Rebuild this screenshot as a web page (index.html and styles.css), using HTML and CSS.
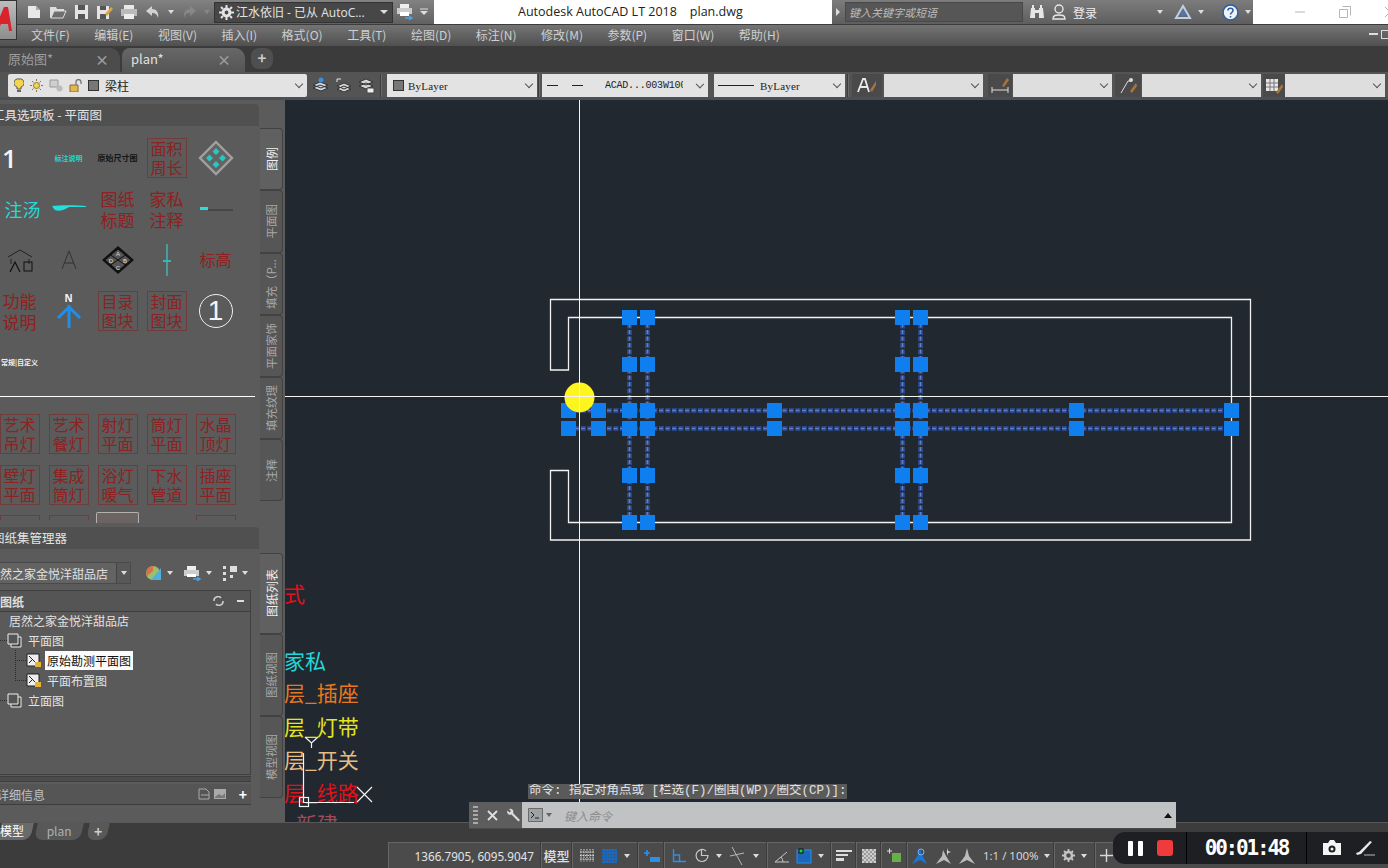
FILE: index.html
```html
<!DOCTYPE html>
<html lang="zh">
<head>
<meta charset="utf-8">
<title>Autodesk AutoCAD LT 2018 plan.dwg</title>
<link rel="stylesheet" href="styles.css">
</head>
<body>
<div class="app">

  <header class="titlebar">
    <div class="qat">
      <svg class="ic" width="16" height="16" viewBox="0 0 16 16"><path d="M2 2h8l4 4v8H2z" fill="#e8e8e8"/><path d="M10 2v4h4" fill="#aaa"/></svg>
      <svg class="ic" width="18" height="16" viewBox="0 0 18 16"><path d="M1 3h6l1 2h7v2H5L2 14H1z" fill="#ddd"/><path d="M5 7h12l-3 7H2z" fill="none" stroke="#ddd"/></svg>
      <svg class="ic" width="15" height="16" viewBox="0 0 15 16"><path d="M1 1h13v14H1z" fill="#e4e4e4"/><path d="M4 1h7v5H4zM4 10h7v5H4z" fill="#555"/></svg>
      <svg class="ic" width="17" height="16" viewBox="0 0 17 16"><path d="M1 2h12v13H1z" fill="#e4e4e4"/><path d="M4 2h6v4H4zM4 10h6v5H4z" fill="#555"/><path d="M9 10l6-7 2 2-6 7z" fill="#d9a441"/></svg>
      <svg class="ic" width="18" height="16" viewBox="0 0 18 16"><path d="M4 1h10v4H4z" fill="#e8e8e8"/><path d="M1 5h16v7H1z" fill="#bbb"/><path d="M4 10h10v5H4z" fill="#eee"/></svg>
      <svg class="ic" width="16" height="14" viewBox="0 0 16 14"><path d="M7 1L1 6l6 5V8c3 0 5 1 6 5 1-5-1-9-6-9z" fill="#d2d2d2"/></svg>
      <span class="tri-s"></span>
      <svg class="ic dim" width="16" height="14" viewBox="0 0 16 14"><path d="M9 1l6 5-6 5V8C6 8 4 9 3 13 2 8 4 4 9 4z" fill="#8c8c8c"/></svg>
      <span class="tri-s dim"></span>
      <div class="workspace">
        <svg width="15" height="15" viewBox="0 0 15 15"><circle cx="7.5" cy="7.5" r="3.4" fill="none" stroke="#e4e4e4" stroke-width="3"/><path d="M7.5 0v3M7.5 12v3M0 7.5h3M12 7.5h3M2 2l2 2M11 11l2 2M13 2l-2 2M2 13l2-2" stroke="#e4e4e4" stroke-width="2"/></svg>
        <span class="ws-text">江水依旧 - 已从 AutoC...</span>
        <span class="tri"></span>
      </div>
      <svg class="ic" width="18" height="18" viewBox="0 0 18 18"><path d="M4 1h9v4H4z" fill="#eee"/><path d="M1 5h15v6H1z" fill="#ccc"/><path d="M4 9h9v4H4z" fill="#fff"/><path d="M9 15h6M13 13l3 2-3 2" stroke="#4da3e0" fill="none" stroke-width="1.5"/></svg>
      <svg class="ic qat-more" width="10" height="8" viewBox="0 0 10 8"><path d="M1 1h8" stroke="#ddd"/><path d="M1 3h8L5 7z" fill="#ddd"/></svg>
    </div>
    <div class="apptitle">Autodesk AutoCAD LT 2018    plan.dwg</div>
    <div class="infocenter">
      <span class="tri-r"></span>
      <div class="search">键入关键字或短语</div>
      <svg class="ic" width="16" height="16" viewBox="0 0 16 16"><path d="M2 4h4v10H1zM10 4h4l1 10h-5z" fill="#e6e6e6"/><path d="M3 1h2v3H3zM11 1h2v3h-2zM6 6h4v3H6z" fill="#e6e6e6"/></svg>
      <svg class="ic" width="16" height="18" viewBox="0 0 16 18"><circle cx="8" cy="6" r="4" fill="none" stroke="#e6e6e6" stroke-width="1.4"/><path d="M2 16c0-4 3-4 6-4s6 0 6 4z" fill="none" stroke="#e6e6e6" stroke-width="1.4"/></svg>
      <span class="login">登录</span>
      <span class="tri-s login-arrow"></span>
      <svg class="ic" width="18" height="17" viewBox="0 0 18 17"><path d="M9 2L2 14h14z" fill="none" stroke="#bcd0ea" stroke-width="2"/><circle cx="9" cy="10" r="2.2" fill="#4d78b8"/></svg>
      <span class="tri-s"></span>
      <svg class="ic help" width="17" height="17" viewBox="0 0 17 17"><circle cx="8.5" cy="8.5" r="7.5" fill="#f2f2f2" stroke="#2a5ea8" stroke-width="1.6"/><path d="M6 6.5c0-3 5-3 5 0 0 2-2.5 2-2.5 4M8.5 12v1.5" fill="none" stroke="#2a5ea8" stroke-width="1.6"/></svg>
      <span class="tri-s"></span>
    </div>
    <div class="winbtns">
      <svg width="12" height="12" viewBox="0 0 12 12"><path d="M1 6h10" stroke="#b5b5b5"/></svg>
      <svg width="12" height="12" viewBox="0 0 12 12"><path d="M3.5 .5h8v9M.5 3.5h8v8h-8z" fill="none" stroke="#b5b5b5"/></svg>
      <svg width="12" height="12" viewBox="0 0 12 12"><path d="M1 1l10 10M11 1L1 11" stroke="#b5b5b5"/></svg>
    </div>
  </header>

  <nav class="menubar">
    <span>文件(F)</span><span>编辑(E)</span><span>视图(V)</span><span>插入(I)</span><span>格式(O)</span><span>工具(T)</span><span>绘图(D)</span><span>标注(N)</span><span>修改(M)</span><span>参数(P)</span><span>窗口(W)</span><span>帮助(H)</span>
    <span class="menu-win"><i class="mw-min"></i><i class="mw-max"></i></span>
  </nav>

  <div class="doctabs">
    <div class="doctab"><span>原始图*</span><b>×</b></div>
    <div class="doctab active"><span>plan*</span><b>×</b></div>
    <div class="doctab plus">+</div>
  </div>

  <div class="proptools">
    <div class="combo layer">
      <svg width="10" height="15" viewBox="0 0 10 15"><path d="M5 1a4 4 0 0 1 2 8v2H3V9a4 4 0 0 1 2-8z" fill="#f4d44a" stroke="#555"/><path d="M3 12h4v2H3z" fill="#666"/></svg>
      <svg width="13" height="13" viewBox="0 0 13 13"><circle cx="6.500" cy="6.500" r="3" fill="#f4d44a" stroke="#8a7a3a"/><path d="M6.500 0v2M6.500 11v2M0 6.500h2M11 6.500h2M2 2l1.500 1.500M9.500 9.500L11 11M11 2L9.500 3.500M2 11l1.500-1.500" stroke="#8a7a3a"/></svg>
      <svg width="14" height="13" viewBox="0 0 14 13"><path d="M1 1h8v7H1z" fill="#cfcfcf" stroke="#999"/><circle cx="10.500" cy="9.500" r="3" fill="#bbb"/></svg>
      <svg width="13" height="13" viewBox="0 0 13 13"><path d="M1 6h8v7H1z" fill="#e2b64a" stroke="#8a6a2a"/><path d="M7 6V3a2.500 2.500 0 0 1 5 0v2" fill="none" stroke="#777" stroke-width="1.300"/></svg>
      <i class="swatch"></i><span class="layername">梁柱</span><span class="chev"></span>
    </div>
    <svg class="tool first" width="17" height="17" viewBox="0 0 17 17"><path d="M1 8l7-3 8 3-7 3zM1 11l7-3 8 3-7 3z" fill="#cfd7de" stroke="#333"/><circle cx="9" cy="3" r="2.500" fill="#3c8ed8"/></svg>
    <svg class="tool" width="17" height="17" viewBox="0 0 17 17"><path d="M2 9l7-3 7 3-7 3zM2 12l7-3 7 3-7 3z" fill="#d4d4d4" stroke="#333"/><path d="M2 5V2h4" fill="none" stroke="#e8e8e8"/></svg>
    <svg class="tool" width="17" height="17" viewBox="0 0 17 17"><path d="M1 5l7-3 7 3-7 3zM1 9l7-3 7 3-7 3z" fill="#d4d4d4" stroke="#333"/><path d="M9 11h7v5H9z" fill="#eee" stroke="#444"/></svg>
    <i class="sep"></i>
    <div class="combo colorc"><i class="swatch"></i><span class="mono">ByLayer</span><span class="chev"></span></div>
    <i class="sep s-a"></i>
    <div class="combo ltype"><i class="dash"></i><i class="dash"></i><span class="mono small">ACAD...003W100</span><span class="chev"></span></div>
    <div class="combo lweight"><i class="rule"></i><span class="mono">ByLayer</span><span class="chev"></span></div>
    <i class="sep s-b"></i>
    <div class="sticon s30"><svg width="20" height="18" viewBox="0 0 20 18"><path d="M1 15L6 2h2l4 13M3 10h7" fill="none" stroke="#e8e8e8" stroke-width="1.800"/><path d="M19 4l-6 9 2 2 4-7z" fill="#a8743c"/></svg></div>
    <div class="combo c1"><span class="chev"></span></div>
    <div class="sticon s24"><svg width="18" height="18" viewBox="0 0 18 18"><path d="M1 13h16M1 10v6M17 10v6" stroke="#ddd"/><path d="M16 1l-5 8 2 1 5-7z" fill="#a8743c"/></svg></div>
    <div class="combo c2"><span class="chev"></span></div>
    <div class="sticon s26"><svg width="18" height="18" viewBox="0 0 18 18"><path d="M2 16L9 4h3" fill="none" stroke="#ddd"/><circle cx="12" cy="3" r="2" fill="#ddd"/><path d="M17 6l-6 8 2 2 5-7z" fill="#a8743c"/></svg></div>
    <div class="combo c3"><span class="chev"></span></div>
    <div class="sticon s22"><svg width="18" height="18" viewBox="0 0 18 18"><path d="M1 2h12v12H1z" fill="#e6e6e6"/><path d="M1 6h12M1 10h12M5 2v12M9 2v12" stroke="#777"/><path d="M17 7l-6 8 2 2 5-7z" fill="#a8743c"/></svg></div>
    <div class="combo c4"><span class="chev"></span></div>
  </div>

  <main class="main">
    <aside class="side">
      <section class="dock tools">
        <div class="dock-body">
          <div class="dock-head">工具选项板 - 平面图</div>
          <div class="palette">
            <div class="pgrid">
              <div class="cell"><span class="num">1</span></div>
              <div class="cell"><span class="tiny cyan">标注说明</span></div>
              <div class="cell"><span class="tiny black">原始尺寸图</span></div>
              <div class="cell"><div class="stamp">面积<br>周长</div></div>
              <div class="cell"><svg width="36" height="36" viewBox="0 0 36 36"><path d="M18 2l16 16-16 16L2 18z" fill="#636363" stroke="#a0a0a0" stroke-width="2.400"/><path d="M18 8l3.500 3.500L18 15l-3.500-3.500zM18 21l3.500 3.500L18 28l-3.500-3.500zM11.500 14.500L15 18l-3.500 3.500L8 18zM24.500 14.500L28 18l-3.500 3.500L21 18z" fill="#27c7c4"/></svg></div>

              <div class="cell"><span class="scrawl">注汤</span></div>
              <div class="cell"><svg width="36" height="12" viewBox="0 0 36 12"><path d="M1 3c8-1 26-1 34 0v1H20c-4 0-4 2-8 3-4 1-8 1-9-1z" fill="#22e0dc"/></svg></div>
              <div class="cell"><div class="label-red">图纸<br>标题</div></div>
              <div class="cell"><div class="label-red">家私<br>注释</div></div>
              <div class="cell"><svg width="36" height="10" viewBox="0 0 36 10"><path d="M2 3h8v3H2z" fill="#22e0dc"/><path d="M10 6h25" stroke="#333"/></svg></div>

              <div class="cell"><svg width="30" height="26" viewBox="0 0 30 26"><path d="M3 10L15 3l12 7M6 12v5M24 12v5" fill="none" stroke="#222"/><rect x="19" y="15" width="8" height="9" fill="none" stroke="#111"/><path d="M5 25l5-10 5 10" fill="none" stroke="#111" stroke-width="1.200"/></svg></div>
              <div class="cell"><svg width="16" height="20" viewBox="0 0 16 20"><path d="M1 19L8 1l7 18M3 13h10" fill="none" stroke="#333"/></svg></div>
              <div class="cell"><svg width="34" height="30" viewBox="0 0 34 30"><path d="M17 1l16 14-16 14L1 15z" fill="#111"/><path d="M17 4l13 11-13 11L4 15z" fill="#555"/><path d="M17 4l13 11-13 11L4 15zM8 9l18 12M26 9L8 21" fill="none" stroke="#111"/><text class="diam" x="17" y="11">A</text><text class="diam" x="24" y="18">B</text><text class="diam" x="17" y="25">C</text><text class="diam" x="10" y="18">D</text></svg></div>
              <div class="cell"><svg width="12" height="34" viewBox="0 0 12 34"><path d="M6 1v32" stroke="#3fb4b4" stroke-width="1.500"/><path d="M2 18h8" stroke="#3fb4b4" stroke-width="2"/></svg></div>
              <div class="cell"><div class="label-red wide">标高</div></div>

              <div class="cell"><div class="label-red">功能<br>说明</div></div>
              <div class="cell north"><span>N</span><svg width="26" height="24" viewBox="0 0 26 24"><path d="M13 1v23M2 14L13 3l11 11" fill="none" stroke="#1e8fea" stroke-width="3"/></svg></div>
              <div class="cell"><div class="stamp">目录<br>图块</div></div>
              <div class="cell"><div class="stamp">封面<br>图块</div></div>
              <div class="cell circle1"><span>1</span></div>

              <div class="cell"><span class="tiny white">常规|自定义</span></div>
            </div>
            <div class="pdivider"></div>
            <div class="pgrid second">
              <div class="cell"><div class="stamp">艺术<br>吊灯</div></div>
              <div class="cell"><div class="stamp">艺术<br>餐灯</div></div>
              <div class="cell"><div class="stamp">射灯<br>平面</div></div>
              <div class="cell"><div class="stamp">筒灯<br>平面</div></div>
              <div class="cell"><div class="stamp">水晶<br>顶灯</div></div>
              <div class="cell"><div class="stamp">壁灯<br>平面</div></div>
              <div class="cell"><div class="stamp">集成<br>筒灯</div></div>
              <div class="cell"><div class="stamp">浴灯<br>暖气</div></div>
              <div class="cell"><div class="stamp">下水<br>管道</div></div>
              <div class="cell"><div class="stamp">插座<br>平面</div></div>
              <div class="cell stubcell"><i class="stub"></i></div>
              <div class="cell stubcell"><i class="stub"></i></div>
              <div class="cell stubcell"><i class="stub sel"></i></div>
              <div class="cell stubcell"></div>
              <div class="cell stubcell"><i class="stub"></i></div>
            </div>
          </div>
        </div>
        <div class="vtabs tooltabs">
          <div class="vtab t62 on"><span>图例</span></div>
          <div class="vtab t63"><span>平面图</span></div>
          <div class="vtab t62"><span>填充（P...</span></div>
          <div class="vtab t62"><span>平面家饰</span></div>
          <div class="vtab t62"><span>填充纹理</span></div>
          <div class="vtab t62"><span>注释</span></div>
        </div>
      </section>

      <section class="dock sheets">
        <div class="dock-body">
          <div class="dock-head">图纸集管理器</div>
          <div class="sheetctl">
            <div class="sheetcombo"><span>然之家金悦洋甜品店</span><i><span class="tri-s"></span></i></div>
            <svg width="18" height="17" viewBox="0 0 18 17"><circle cx="8" cy="8" r="7" fill="#9bbf6a"/><path d="M8 1a7 7 0 0 0-6 10l6-5z" fill="#d9704a"/><path d="M6 15l10-12v12z" fill="#4fb0dc"/></svg>
            <span class="tri-s"></span>
            <svg class="gapl" width="19" height="17" viewBox="0 0 19 17"><path d="M4 1h9v4H4z" fill="#eee"/><path d="M1 5h15v6H1z" fill="#ccc"/><path d="M4 9h9v3H4z" fill="#fff"/><path d="M10 14h7M14 12l3 2-3 2" stroke="#4da3e0" fill="none" stroke-width="1.500"/></svg>
            <span class="tri-s"></span>
            <svg class="gapl" width="16" height="17" viewBox="0 0 16 17"><path d="M1 1h3v3H1zM1 7h3v3H1zM1 13h3v3H1z" fill="#ddd"/><path d="M8 1h7v6H8zM8 10h3v3H8z" fill="#ddd"/></svg>
            <span class="tri-s"></span>
          </div>
          <div class="sheetbox">
            <div class="sb-head"><span>图纸</span><svg class="sb-refresh" width="11" height="10" viewBox="0 0 11 10"><path d="M1 5a4 4 0 0 1 7-3M10 5a4 4 0 0 1-7 3" fill="none" stroke="#ccc" stroke-width="1.600"/></svg><i class="sb-min"></i></div>
            <ul class="tree">
              <li class="lv0"><span>居然之家金悦洋甜品店</span></li>
              <li class="lv1"><svg width="15" height="15" viewBox="0 0 15 15"><path d="M4 4h10v10H4z" fill="#444" stroke="#eee"/><path d="M1 1h10v10H1z" fill="#555" stroke="#eee"/></svg><span>平面图</span></li>
              <li class="lv2"><svg width="16" height="15" viewBox="0 0 16 15"><path d="M1 1h12v12H1z" fill="#eee" stroke="#222"/><path d="M3 3l8 8M3 10l4-4" stroke="#222"/><path d="M9 9h6v5H9z" fill="#e5b23c"/></svg><span class="sel">原始勘测平面图</span></li>
              <li class="lv2 end"><svg width="16" height="15" viewBox="0 0 16 15"><path d="M1 1h12v12H1z" fill="#eee" stroke="#222"/><path d="M3 3l8 8M3 10l4-4" stroke="#222"/><path d="M9 9h6v5H9z" fill="#e5b23c"/></svg><span>平面布置图</span></li>
              <li class="lv1"><svg width="15" height="15" viewBox="0 0 15 15"><path d="M4 4h10v10H4z" fill="#444" stroke="#eee"/><path d="M1 1h10v10H1z" fill="#555" stroke="#eee"/></svg><span>立面图</span></li>
            </ul>
          </div>
          <div class="sb-strip"></div>
          <div class="details"><span>详细信息</span>
            <svg class="d1" width="12" height="12" viewBox="0 0 12 12"><path d="M1 1h7l3 3v7H1zM3 7h8" fill="none" stroke="#aaa"/></svg>
            <svg width="12" height="12" viewBox="0 0 12 12"><path d="M0 1h12v10H0z" fill="#aaa"/><path d="M1 9l4-3 3 2 3-3v5H1z" fill="#777"/></svg>
            <b>+</b>
          </div>
        </div>
        <div class="vtabs sheettabs">
          <div class="vtab t81 on"><span>图纸列表</span></div>
          <div class="vtab t82"><span>图纸视图</span></div>
          <div class="vtab t82"><span>模型视图</span></div>
        </div>
      </section>
    </aside>

    <div class="canvas">
      <svg class="drawing" width="1103" height="722" viewBox="285 100 1103 722">
        <defs><rect id="g" x="-7.5" y="-7.5" width="15" height="15" fill="#0f7fef"/></defs>
        <path class="wall" d="M550.500 299.500H1250.500V540H550.500V470.500H568.500V522.500H1231.500V317.500H568.500V370H550.500Z"/>
        <g class="beam-b">
          <path d="M568 410.500H1231M568 428.500H1231M629.500 317V522M647.500 317V522M902.500 317V522M920.500 317V522"/>
        </g>
        <g class="beam-d">
          <path d="M568 410.500H1231M568 428.500H1231M629.500 317V522M647.500 317V522M902.500 317V522M920.500 317V522"/>
        </g>
        <use href="#g" x="629.5" y="317.5"/><use href="#g" x="647.5" y="317.5"/><use href="#g" x="902.5" y="317.5"/><use href="#g" x="920.5" y="317.5"/>
        <use href="#g" x="629.5" y="364.5"/><use href="#g" x="647.5" y="364.5"/><use href="#g" x="902.5" y="364.5"/><use href="#g" x="920.5" y="364.5"/>
        <use href="#g" x="568.5" y="410.5"/><use href="#g" x="598.5" y="410.5"/><use href="#g" x="629.5" y="410.5"/><use href="#g" x="647.5" y="410.5"/><use href="#g" x="774.5" y="410.5"/><use href="#g" x="902.5" y="410.5"/><use href="#g" x="920.5" y="410.5"/><use href="#g" x="1076.5" y="410.5"/><use href="#g" x="1231.5" y="410.5"/>
        <use href="#g" x="568.5" y="428.5"/><use href="#g" x="598.5" y="428.5"/><use href="#g" x="629.5" y="428.5"/><use href="#g" x="647.5" y="428.5"/><use href="#g" x="774.5" y="428.5"/><use href="#g" x="902.5" y="428.5"/><use href="#g" x="920.5" y="428.5"/><use href="#g" x="1076.5" y="428.5"/><use href="#g" x="1231.5" y="428.5"/>
        <use href="#g" x="629.5" y="475.5"/><use href="#g" x="647.5" y="475.5"/><use href="#g" x="902.5" y="475.5"/><use href="#g" x="920.5" y="475.5"/>
        <use href="#g" x="629.5" y="522.5"/><use href="#g" x="647.5" y="522.5"/><use href="#g" x="902.5" y="522.5"/><use href="#g" x="920.5" y="522.5"/>
        <circle cx="579.500" cy="397.500" r="15" fill="#fff51e"/>
        <text class="lbl l-red" x="284" y="602">式</text>
        <text class="lbl l-cyan" x="284" y="669">家私</text>
        <text class="lbl l-orange" x="284" y="701">层_插座</text>
        <text class="lbl l-yellow" x="284" y="735">层_灯带</text>
        <text class="lbl l-tan" x="284" y="768">层_开关</text>
        <text class="lbl l-red" x="284" y="801">层_线路</text>
        <text class="lbl l-pink" x="296" y="832">新建</text>
        <path class="ucs" d="M303.500 753V802.500H354M305 737L311.500 743L318 737M311.500 743V748M357 787L372 802M372 787L357 802"/>
        <rect class="ucs" x="299.500" y="797.500" width="9" height="9"/>
      </svg>
      <div class="cmdwrap">
        <div class="cmdhist">命令: 指定对角点或 [栏选(F)/圈围(WP)/圈交(CP)]:</div>
        <div class="cmdbar">
          <div class="cmdleft">
            <i class="grab"></i>
            <svg width="11" height="11" viewBox="0 0 11 11"><path d="M1 1l9 9M10 1l-9 9" stroke="#e0e0e0" stroke-width="1.800"/></svg>
            <svg width="14" height="14" viewBox="0 0 14 14"><path d="M2 1a3 3 0 0 1 4 4l7 7-1.500 1.500-7-7a3 3 0 0 1-4-4l2 2 1.500-1.500z" fill="#dcdcdc"/></svg>
          </div>
          <div class="cmdinput">
            <svg width="15" height="14" viewBox="0 0 15 14"><path d="M.5.5h14v13H.5z" fill="#9fa2a4" stroke="#6a6a6a"/><path d="M3 4l3 3-3 3M7 10h4" fill="none" stroke="#222"/></svg>
            <span class="tri-s cmdarrow"></span>
            <span class="cmdph">键入命令</span>
            <span class="tri-up"></span>
          </div>
        </div>
      </div>
      <i class="cross-v"></i>
      <i class="cross-h"></i>
    </div>
  </main>

  <div class="layouttabs">
    <div class="ltab on"><span>模型</span></div>
    <div class="ltab"><span>plan</span></div>
    <div class="ltab add"><span>+</span></div>
  </div>

  <footer class="statusbar">
    <div class="cell-s w152 coord">1366.7905, 6095.9047</div>
    <div class="cell-s w30 model">模型</div>
    <div class="cell-s w65">
      <svg width="14" height="13" viewBox="0 0 14 13"><path d="M1 0v13M4 0v13M7 0v13M10 0v13M13 0v13M0 3h14M0 6.500h14M0 10h14" stroke="#d8d8d8" stroke-dasharray="1.500 1"/></svg>
      <svg width="15" height="14" viewBox="0 0 15 14"><rect width="15" height="14" fill="#1d66b8"/><path d="M0 2.500h15M0 5.500h15M0 8.500h15M0 11.500h15" stroke="#4a4a4a" stroke-dasharray="1 2"/></svg>
      <span class="tri-s"></span>
    </div>
    <div class="cell-s w25"><svg width="17" height="14" viewBox="0 0 17 14"><path d="M4 1v6M1 4h6" stroke="#2a90ea" stroke-width="1.600"/><path d="M7 8h10v5H7z" fill="#2a90ea"/></svg></div>
    <div class="cell-s w102">
      <svg width="14" height="14" viewBox="0 0 14 14"><path d="M1.500 0v12.500H14M1.500 6h6v6.500" fill="none" stroke="#2a90ea" stroke-width="1.400"/></svg>
      <svg width="15" height="15" viewBox="0 0 15 15"><path d="M12 3a6 6 0 1 0 2 4.500H7.500V2" fill="none" stroke="#c8c8c8" stroke-width="1.200"/></svg>
      <span class="tri-s"></span>
      <svg width="16" height="18" viewBox="0 0 16 18"><path d="M3 0l10 18M1 9l14-3" fill="none" stroke="#b8b8b8"/></svg>
      <span class="tri-s"></span>
    </div>
    <div class="cell-s w63">
      <svg width="16" height="14" viewBox="0 0 16 14"><path d="M1 13h14M1 13L13 3" fill="none" stroke="#c8c8c8"/><path d="M9 13a8 8 0 0 0-2-5" fill="none" stroke="#c8c8c8"/></svg>
      <svg width="16" height="16" viewBox="0 0 16 16"><rect x="1" y="2" width="14" height="13" fill="#1d66b8" stroke="#2a90ea"/><rect x="3" y="1" width="4" height="4" fill="#1fd03a" stroke="#111"/></svg>
      <span class="tri-s"></span>
    </div>
    <div class="cell-s w24"><svg width="16" height="13" viewBox="0 0 16 13"><path d="M0 1h16v2H0zM0 5h12v2H0zM0 9h8v3H0z" fill="#dcdcdc"/></svg></div>
    <div class="cell-s w24"><svg width="14" height="14" viewBox="0 0 14 14"><rect width="14" height="14" fill="#cfcfcf"/><path d="M0 3h14M0 7h14M0 11h14M3 0v14M7 0v14M11 0v14" stroke="#666" stroke-dasharray="2 2"/></svg></div>
    <div class="cell-s w25"><svg width="15" height="15" viewBox="0 0 15 15"><path d="M0 3h5M2.500 .5v5" stroke="#ddd"/><path d="M5 5h9v9H5z" fill="#6aae4a"/></svg></div>
    <div class="cell-s w146 annot">
      <svg width="17" height="18" viewBox="0 0 17 18"><path d="M1 17L7 8l2-7 2 7 5 9-7-4z" fill="#1f74d8"/><circle cx="10" cy="5" r="3" fill="none" stroke="#6fb4ff"/></svg>
      <svg width="17" height="18" viewBox="0 0 17 18"><path d="M1 17L7 9l1-6 3 6 5 8-7-4z" fill="#bcbcbc"/><path d="M12 1l1 3 3 1-3 1-1 3" fill="#ddd"/></svg>
      <svg width="16" height="18" viewBox="0 0 16 18"><path d="M0 17L6 9l2-8 2 8 6 8-8-4z" fill="#bcbcbc"/></svg>
      <span class="scale">1:1 / 100%</span>
      <span class="tri-s"></span>
    </div>
    <div class="cell-s w40">
      <svg width="13" height="13" viewBox="0 0 13 13"><circle cx="6.500" cy="6.500" r="3.500" fill="none" stroke="#c4c4c4" stroke-width="2.500"/><path d="M6.500 0v2M6.500 11v2M0 6.500h2M11 6.500h2M2 2l1.500 1.500M9.500 9.500L11 11M11 2L9.500 3.500M2 11l1.500-1.500" stroke="#c4c4c4" stroke-width="1.800"/></svg>
      <span class="tri-s"></span>
    </div>
    <div class="cell-s grow"><svg class="plusi" width="13" height="13" viewBox="0 0 13 13"><path d="M6.500 0v13M0 6.500h13" stroke="#d8d8d8" stroke-width="1.400"/></svg></div>
  </footer>
</div>

<div class="logo">
  <svg width="17" height="38" viewBox="0 0 17 38"><path d="M-6 30L4 6h4l4 24h-3l-1-7H1l-3 7z" fill="#d8232a"/></svg>
</div>

<div class="recorder">
  <div class="rec-ctl"><i class="pause"></i><i class="pause"></i><i class="stop"></i></div>
  <div class="rec-time">00:01:48</div>
  <div class="rec-tools">
    <svg width="20" height="16" viewBox="0 0 20 16"><path d="M1 3h5l2-3h4l2 3h5v12H1z" fill="#f4f4f4"/><circle cx="10" cy="9" r="3.500" fill="#1d1f22"/><circle cx="10" cy="9" r="1.500" fill="#f4f4f4"/></svg>
    <svg width="20" height="16" viewBox="0 0 20 16"><path d="M1 13l3-1 11-11 2 1-11 12-4 1z" fill="#e8e8e8"/><path d="M9 15h11" stroke="#bbb"/></svg>
  </div>
</div>
</body>
</html>
```
FILE: styles.css
```css
* { box-sizing: border-box; }
html, body { margin: 0; padding: 0; }
body {
  width: 1388px; height: 868px; overflow: hidden; position: relative;
  font-family: "Noto Sans CJK SC", "Noto Sans", sans-serif; background: #3c3c3c; color: #ddd;
}
.app { display: flex; flex-direction: column; width: 1388px; height: 868px; }
i { font-style: normal; display: block; }
svg { display: block; flex: none; }

/* triangles */
.tri-s { display: block; width: 0; height: 0; border: 3px solid transparent; border-top: 4px solid #ddd; border-bottom: 0; flex: none; }
.tri-s.dim { border-top-color: #8c8c8c; }
.tri { display: block; width: 0; height: 0; border: 4px solid transparent; border-top: 4px solid #ddd; border-bottom: 0; margin-left: auto; }
.tri-r { display: block; width: 0; height: 0; border: 4px solid transparent; border-left: 4px solid #ddd; border-right: 0; margin-left: 4px; flex: none; }
.tri-up { display: block; width: 0; height: 0; border: 4px solid transparent; border-bottom: 5px solid #111; border-top: 0; margin-left: auto; margin-right: 4px; }
.dim { opacity: .85; }

/* title bar */
.titlebar { height: 24px; background: #fff; display: flex; align-items: stretch; flex: none; }
.qat {
  width: 434px; flex: none; padding-left: 26px; display: flex; align-items: center; gap: 7px;
  background: linear-gradient(#828282, #616161);
}
.qat-more { margin-left: -2px; }
.workspace {
  width: 179px; height: 21px; flex: none; background: #474747; border: 1px solid #333; margin-left: -3px; margin-right: -4px;
  display: flex; align-items: center; gap: 2px; padding: 0 4px; color: #e2e2e2; font-size: 12px;
}
.ws-text { white-space: nowrap; font-family: "Open Sans", "Noto Sans CJK SC", sans-serif; }
.apptitle {
  width: 398px; flex: none; padding-left: 84px; font: 12.5px/24px "Open Sans", "Noto Sans CJK SC", sans-serif; color: #222; white-space: pre;
}
.infocenter {
  width: 421px; flex: none; background: linear-gradient(#7c7c7c, #5e5e5e); display: flex; align-items: center; gap: 6px;
}
.search {
  width: 178px; height: 20px; flex: none; margin-left: -1px; background: #565656; border: 1px solid #484848; color: #bcbcbc;
  font-size: 11px; font-style: italic; line-height: 18px; padding-left: 3px; white-space: nowrap;
}
.login { font-size: 12px; color: #eee; white-space: nowrap; flex: none; }
.login-arrow { margin-left: 54px; margin-right: 5px; }
.help { margin-left: 12px; }
.winbtns { flex: 1; display: flex; align-items: center; gap: 33px; padding-left: 41px; overflow: hidden; }

/* menu */
.menubar {
  height: 22px; flex: none; display: flex; align-items: center; gap: 24.5px; padding: 0 0 3px 31px;
  background: linear-gradient(#747474, #505050); color: #cfcfcf; font-size: 12px; border-top: 1px solid #3c3c3c;
}
.menu-win { margin-left: auto; display: flex; gap: 3px; padding-right: 2px; align-items: center; }
.mw-min { width: 9px; height: 2px; background: #ddd; }
.mw-max { width: 9px; height: 9px; border: 1px solid #ddd; margin-right: -4px; }

/* doc tabs */
.doctabs { height: 26px; flex: none; background: #3b3b3b; display: flex; align-items: flex-end; font-size: 13px; }
.doctab {
  width: 120px; height: 24px; background: #4c4c4c; border-radius: 0 10px 0 0; padding: 0 11px 3px 8px;
  display: flex; justify-content: space-between; align-items: center; color: #9c9c9c; margin-right: 2px;
}
.doctab.active { width: 123px; background: linear-gradient(#676767, #555); color: #e0e0e0; border-radius: 8px 10px 0 0; padding-left: 9px; padding-right: 14px; }
.doctab b { color: #9c9c9c; font-size: 14px; font-weight: 700; }
.doctab.plus { width: 22px; height: 21px; margin: 0 0 3px 4px; padding: 0 0 2px; justify-content: center; font-size: 15px; font-weight: 700; color: #ccc; background: #4f4f4f; border-radius: 8px; }

/* property toolbar */
.proptools { height: 28px; flex: none; background: #545454; display: flex; align-items: flex-start; padding-top: 2px; border-bottom: 3px solid #4a5054; }
.combo {
  height: 23px; background: #e3e3e3; display: flex; align-items: center; gap: 4px; color: #222; font-size: 11px; padding: 0 5px; flex: none;
}
.layer { width: 299px; margin-left: 8px; gap: 6px; padding-left: 6px; border-radius: 2px; }
.swatch { width: 11px; height: 11px; background: #777; border: 1px solid #333; }
.layername { font-size: 12px; }
.chev { width: 6px; height: 6px; border-right: 1px solid #555; border-bottom: 1px solid #555; transform: rotate(45deg); margin-left: auto; margin-top: -3px; }
.tool { margin-top: 3px; margin-left: 6px; }
.tool.first { margin-left: 5px; }
.sep { width: 2px; height: 23px; background: #3d3d3d; margin: 0 5px; border-right: 1px solid #6a6a6a; flex: none; }
.sep.s-a { margin: 0 2px 0 1px; }
.sep.s-b { margin: 0 3px 0 2px; }
.colorc { width: 150px; padding-left: 6px; }
.mono { font-family: "Liberation Serif", serif; font-size: 11px; letter-spacing: .2px; }
.mono.small { white-space: nowrap; overflow: hidden; width: 86px; margin-left: 8px; font-family: "Liberation Mono", monospace; font-size: 10px; letter-spacing: -.2px; }
.ltype { width: 166px; padding-left: 5px; gap: 14px; }
.dash { width: 12px; height: 1px; background: #222; }
.lweight { width: 131px; margin-left: 6px; padding-left: 4px; gap: 6px; }
.rule { width: 36px; height: 1px; background: #222; }
.sticon { height: 23px; background: #4a4a4a; display: flex; align-items: center; justify-content: center; flex: none; }
.s30 { width: 30px; } .s24 { width: 24px; margin-left: 5px; } .s26 { width: 26px; margin-left: 3px; } .s22 { width: 22px; margin-left: 2px; }
.c1, .c2, .c3, .c4 { background: #dedede; }
.c1 { width: 99px; margin-left: 2px; } .c2 { width: 99px; margin-left: 1px; } .c3 { width: 119px; margin-left: 1px; } .c4 { width: 100px; }

/* main */
.main { flex: 1; display: flex; min-height: 0; }
.side { width: 285px; flex: none; background: #5b5b5b; display: flex; flex-direction: column; overflow: hidden; }
.dock { display: flex; flex: none; }
.tools { height: 427px; padding-top: 4px; }
.sheets { height: 295px; }
.dock-body { width: 260px; flex: none; display: flex; flex-direction: column; overflow: hidden; }
.dock-head {
  height: 22px; flex: none; background: #505050; color: #e4e4e4; font-size: 12.5px; line-height: 21px; margin-left: -8px; width: 267px;
  border-radius: 0 4px 0 0; white-space: nowrap;
}
.palette { height: 397px; overflow: hidden; padding-top: 6px; width: 259px; }
.pgrid { display: grid; grid-template-columns: repeat(5, 49px); grid-auto-rows: 51px; margin-left: -5px; width: 245px; }
.pgrid.second { margin-top: 11px; }
.cell { display: flex; align-items: center; justify-content: center; overflow: hidden; }
.stamp { width: 40px; height: 40px; border: 1px solid #6f3b3b; color: #8e2121; font-size: 16px; line-height: 19px; text-align: center; white-space: nowrap; }
.label-red { color: #8e2121; font-size: 17px; line-height: 21px; text-align: center; white-space: nowrap; }
.label-red.wide { font-size: 16px; }
.num { font: 600 26px/1 "Open Sans", sans-serif; color: #f4f4f4; margin-left: -20px; }
.tiny { font-size: 7px; white-space: nowrap; font-weight: 700; }
.tiny.cyan { color: #29d4d4; }
.tiny.black { color: #151515; font-size: 8px; }
.tiny.white { color: #f0f0f0; }
.scrawl { font-size: 18px; color: #25d8d8; margin-right: -6px; }
.north { flex-direction: column; }
.north span { font: 700 10px/11px "Open Sans", sans-serif; color: #f4f4f4; }
.circle1 span { width: 34px; height: 34px; border: 1px solid #f0f0f0; border-radius: 50%; text-align: center; font: 28px/32px "Liberation Sans", sans-serif; color: #f4f4f4; display: block; }
.diam { font: 6px "Liberation Sans", sans-serif; fill: #ddd; text-anchor: middle; }
.pdivider { height: 1px; background: #fff; margin-top: 9px; width: 255px; }
.stubcell { align-items: flex-start; }
.stub { width: 40px; height: 5px; margin-top: 5px; border: 1px solid #6f3b3b; border-bottom: 0; }
.stub.sel { width: 43px; height: 12px; margin-top: 2px; background: #6a6562; border: 1px solid #b5b0ad; border-bottom: 0; border-radius: 2px 2px 0 0; }

/* vertical tabs */
.vtabs { width: 24px; flex: none; display: flex; flex-direction: column; }
.tooltabs { padding-top: 24px; }
.sheettabs { padding-top: 26px; }
.vtab {
  width: 23px; background: #565656; border: 1px solid #424242; border-left: 0; border-radius: 0 4px 4px 0;
  display: flex; align-items: center; justify-content: center; color: #a8a8a8; font-size: 11.5px; overflow: hidden;
}
.vtab span { writing-mode: vertical-rl; text-orientation: sideways; transform: rotate(180deg); white-space: nowrap; }
.vtab.on { background: #606060; color: #efefef; font-size: 12px; }
.t62 { height: 62px; } .t63 { height: 63px; } .t81 { height: 81px; } .t82 { height: 82px; }

/* sheet set */
.sheetctl { height: 22px; margin-top: 13px; display: flex; align-items: center; gap: 4px; flex: none; }
.sheetcombo {
  width: 131px; height: 22px; background: #636363; border: 1px solid #4a4a4a; border-left: 0; display: flex; align-items: center; justify-content: space-between;
  font-size: 12px; color: #e0e0e0; margin-right: 10px; white-space: nowrap; flex: none; overflow: hidden;
}
.sheetcombo i { width: 14px; height: 20px; background: #585858; border-left: 1px solid #444; display: flex; align-items: center; justify-content: center; flex: none; }
.gapl { margin-left: 6px; }
.sheetbox { width: 251px; height: 185px; margin-top: 6px; border: 1px solid #404040; border-left: 0; background: #5a5a5a; flex: none; }
.sb-head {
  height: 21px; background: #555; border-bottom: 1px solid #3d3d3d; display: flex; align-items: center; color: #dedede; font-size: 12px; font-weight: 700; padding-right: 6px;
}
.sb-refresh { margin-left: auto; margin-right: 13px; }
.sb-min { width: 7px; height: 2px; background: #ddd; }
.tree { list-style: none; margin: -2px 0 0; padding: 0; font-size: 12px; color: #e2e2e2; }
.tree li { height: 20px; display: flex; align-items: center; white-space: nowrap; }
.lv0 { padding-left: 9px; }
.lv1 {
  padding-left: 7px; gap: 6px;
  background: repeating-linear-gradient(90deg, #2c2c2c 0 1px, transparent 1px 2px) 0 50% / 7px 1px no-repeat;
}
.lv2 {
  padding-left: 26px; gap: 3px;
  background:
    repeating-linear-gradient(90deg, #2c2c2c 0 1px, transparent 1px 2px) 15px 50% / 11px 1px no-repeat,
    repeating-linear-gradient(#2c2c2c 0 1px, transparent 1px 2px) 15px 0 / 1px 100% no-repeat;
}
.lv2.end { background-size: 11px 1px, 1px 50%; }
.lv2 span { padding: 0 2px; }
.lv2 .sel { background: #fbfbfb; color: #111; height: 19px; line-height: 19px; }
.sb-strip { height: 6px; width: 251px; margin-top: 1px; background: #4b4b4b; border-bottom: 1px solid #3f3f3f; border-top: 1px solid #3f3f3f; flex: none; }
.details {
  width: 251px; height: 21px; margin-top: 2px; background: #555; border-bottom: 1px solid #3d3d3d; display: flex; align-items: center; gap: 4px; font-size: 12px; color: #c0c0c0; padding-right: 4px; flex: none;
}
.details span { margin-left: -3px; }
.d1 { margin-left: auto; }
.details b { color: #fff; font-size: 14px; margin-left: 9px; line-height: 1; }

/* canvas */
.canvas { flex: 1; background: #212830; position: relative; }
.drawing { position: absolute; left: 0; top: 0; }
.wall { fill: none; stroke: #f2f2f2; stroke-width: 1.3; }
.beam-b path { fill: none; stroke: #2a4585; stroke-width: 5; stroke-dasharray: 5 1.500; }
.beam-d path { fill: none; stroke: #6480c0; stroke-width: 1.600; stroke-dasharray: 4 2.500; }
.lbl { font-size: 21px; font-family: "Noto Sans CJK SC", sans-serif; }
.l-red { fill: #e0121b; } .l-cyan { fill: #22d8d8; } .l-orange { fill: #e8781e; } .l-yellow { fill: #e6e51e; } .l-tan { fill: #e8bd84; } .l-pink { fill: #a04a5a; }
.ucs { fill: none; stroke: #f4f4f4; stroke-width: 1.2; }
.cross-v { position: absolute; left: 294px; top: 0; width: 1px; height: 720px; background: #f4f4f4; }
.cross-h { position: absolute; left: 0; right: 0; top: 296px; height: 1px; background: #f4f4f4; }
.cmdwrap { position: absolute; left: 184px; top: 684px; width: 707px; z-index: 1; }
.cmdhist {
  margin-left: 59px; width: 319px; height: 15px; background: #5a5a5a; color: #e2e2e2;
  font: 12.500px/15px "Liberation Mono", "Noto Sans CJK SC", monospace; white-space: nowrap; overflow: hidden; padding-left: 1px;
}
.cmdbar { height: 26px; margin-top: 3px; display: flex; background: #c0c2c4; box-shadow: 0 1px 0 #4a4a4a; }
.cmdleft { width: 53px; background: #5d5d5d; display: flex; align-items: center; gap: 9px; padding-left: 4px; flex: none; }
.grab { width: 5px; height: 18px; background: repeating-linear-gradient(#aaa 0 2px, transparent 2px 4px); }
.cmdinput { flex: 1; display: flex; align-items: center; gap: 3px; padding-left: 6px; }
.cmdarrow { border-top-color: #666; }
.cmdph { font-size: 12px; font-style: italic; color: #8a8c8e; margin-left: 9px; }

/* layout tabs */
.layouttabs { height: 20px; flex: none; background: #3c3c3c; border-top: 1px solid #585858; display: flex; font-size: 12px; gap: 4px; align-items: flex-start; }
.ltab { width: 46px; height: 17px; background: #585858; color: #b0b0b0; text-align: center; line-height: 16px; border-radius: 0 0 8px 8px; transform: skewX(-12deg); }
.ltab span { display: block; transform: skewX(12deg); }
.ltab.on { width: 32px; background: #6a6a6a; color: #fff; border-radius: 0 0 8px 0; text-indent: -8px; }
.ltab.add { width: 20px; margin-left: 2px; font-weight: 700; color: #ccc; font-size: 14px; }

/* status bar */
.statusbar { height: 26px; flex: none; background: #3c3c3c; display: flex; padding-left: 388px; gap: 1px; }
.cell-s {
  height: 26px; background: #4b4b4b; border: 1px solid #666; border-bottom: 0; border-right: 0; flex: none;
  display: flex; align-items: center; justify-content: space-evenly; color: #e0e0e0; font-size: 12px;
}
.w152 { width: 152px; } .w30 { width: 30px; } .w65 { width: 65px; } .w25 { width: 25px; } .w24 { width: 24px; } .w102 { width: 102px; }
.w63 { width: 63px; } .w146 { width: 146px; } .w40 { width: 40px; }
.annot { justify-content: flex-start; padding-left: 3px; gap: 7px; }
.grow { flex: 1; justify-content: flex-start; padding-left: 4px; }
.coord { justify-content: flex-end; padding-right: 6px; font: 11.700px "Noto Sans", sans-serif; color: #e4e4e4; white-space: nowrap; }
.model { font-size: 13px; font-weight: 500; justify-content: center; white-space: nowrap; }
.scale { font: 11.500px "Open Sans", sans-serif; color: #ddd; white-space: nowrap; margin-left: 1px; margin-right: -2px; }

/* overlays */
.logo { position: absolute; left: 0; top: 0; width: 17px; height: 40px; background: linear-gradient(#bdbdbd, #8d8d8d); border: 1px solid #333; border-left: 0; overflow: hidden; }
.recorder {
  position: absolute; left: 1113px; top: 832px; width: 275px; height: 32px; background: #1d1f22; border-radius: 12px 0 0 12px;
  display: flex; align-items: center; color: #fff;
}
.rec-ctl { width: 74px; height: 32px; display: flex; align-items: center; padding-left: 15px; gap: 5px; border-right: 1px solid #000; flex: none; }
.pause { width: 5px; height: 15px; background: #fff; border-radius: 1px; }
.stop { width: 16px; height: 16px; background: #ef3b3b; border-radius: 3px; margin-left: 9px; }
.rec-time { width: 120px; height: 32px; flex: none; text-align: center; font: 700 21px/32px "DejaVu Sans Mono", monospace; letter-spacing: -2.200px; border-right: 1px solid #000; }
.rec-tools { flex: 1; display: flex; align-items: center; gap: 13px; padding-left: 15px; }
```
